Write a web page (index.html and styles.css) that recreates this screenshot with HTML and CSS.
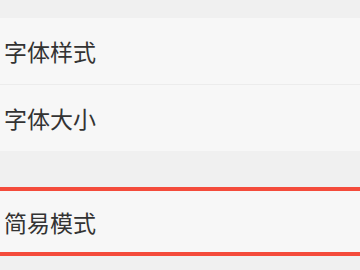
FILE: index.html
```html
<!DOCTYPE html>
<html lang="zh-CN">
<head>
  <meta charset="UTF-8">
  <meta name="viewport" content="width=device-width, initial-scale=1.0">
  <title>设置</title>
  <link rel="stylesheet" href="styles.css">
</head>
<body>

  <div class="settings-group">
    <div class="setting-item">字体样式</div>
    <div class="setting-item">字体大小</div>
  </div>

  <!-- Highlighted option -->
  <div class="settings-group highlight">
    <div class="setting-item">简易模式</div>
  </div>

</body>
</html>
```

FILE: styles.css
```css
body {
  font-family: "Noto Sans CJK SC", "Noto Sans", sans-serif;
  background-color: #f0f0f0;
  margin: 0;
  padding-top: 18px;
  color: #333;
}
.settings-group {
  background-color: #f7f7f7;
}
.settings-group + .settings-group {
  margin-top: 36px;
}
.setting-item {
  height: 66px;
  display: flex;
  align-items: center;
  padding-left: 4px;
  font-size: 23px;
}
.setting-item + .setting-item {
  border-top: 1px solid #ececec;
}
.highlight {
  border-top: 4px solid #f44b3b;
  border-bottom: 4px solid #f44b3b;
}
.highlight .setting-item {
  height: 61px;
}
```
